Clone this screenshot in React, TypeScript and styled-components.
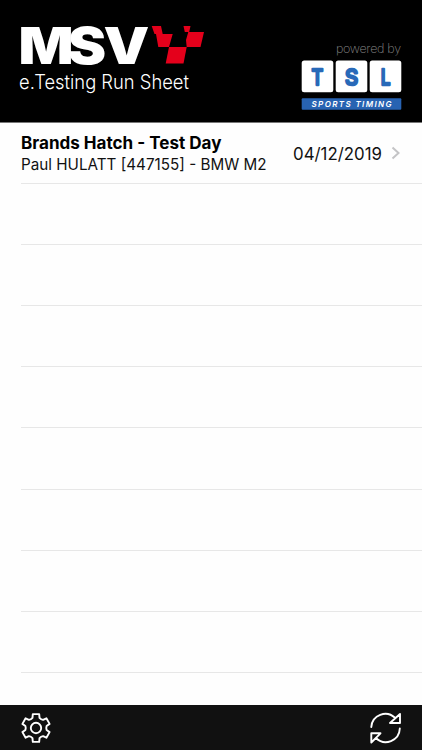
import React from "react";
import styled, { createGlobalStyle } from "styled-components";

const GlobalStyle = createGlobalStyle`
  * { box-sizing: border-box; }
  body { margin: 0; background: #fff; font-family: Inter, "Liberation Sans", sans-serif; }
`;

const Screen = styled.div`
  width: 100%;
  height: 100vh;
  display: flex;
  flex-direction: column;
  overflow: hidden;
  background: #fefefe;
`;

const Header = styled.header`
  flex: none;
  height: 123px;
  padding: 25px 20px 0 19px;
  display: flex;
  justify-content: space-between;
  background: #000;
  border-bottom: 1px solid #777;
`;

const Brand = styled.div`
  display: flex;
  flex-direction: column;
`;

const Logo = styled.svg`
  display: block;
  width: 186px;
  height: 40px;
  overflow: visible;
`;

const Fit = styled.svg`
  display: block;
  overflow: visible;
`;

const Timing = styled.div`
  width: 101px;
  padding-top: 14px;
`;

const List = styled.main`
  flex: 1;
  min-height: 0;
  overflow: hidden;
  padding-left: 21px;
`;

const Row = styled.div`
  height: 61.1px;
  border-bottom: 1px solid #e7e7e7;
  display: flex;
  align-items: center;
  justify-content: space-between;
  padding-right: 21px;
`;

const Details = styled.div`
  display: flex;
  flex-direction: column;
`;

const Footer = styled.footer`
  flex: none;
  height: 45px;
  padding: 0 20px;
  display: flex;
  align-items: center;
  justify-content: space-between;
  background: #111;
`;

const IconButton = styled.button`
  display: flex;
  padding: 0;
  border: 0;
  background: none;
`;

const DateGroup = styled.div`
  display: flex;
  align-items: center;
  gap: 9px;
`;

type LineProps = {
  text: string;
  width: number;
  height: number;
  size: number;
  baseline: number;
  weight?: number;
  fill?: string;
};

function TextLine({ text, width, height, size, baseline, weight = 400, fill = "#111" }: LineProps) {
  return (
    <Fit width={width} height={height}>
      <text x="0" y={baseline} fontSize={size} fontWeight={weight} fill={fill} textLength={width} lengthAdjust="spacingAndGlyphs">
        {text}
      </text>
    </Fit>
  );
}

function MsvLogo() {
  return (
    <Logo viewBox="19 25 186 40">
      <text transform="translate(18.500 63.500) scale(1.120 1)" x="0 44 76" fill="#fff" fontWeight="900" fontSize="51.500">
        MSV
      </text>
      <g fill="#e4001b">
        <path d="M151.700 26h9.300l1.700 8h10L169 47h-10.700L156 34h-1.500z" />
        <path d="M183.500 26h7l-1.300 6H204l-3.500 15h-13.800L186 40l2.300-8h-3.500z" />
        <path d="M169 47h17.700l-3.200 16.500h-17.800z" />
      </g>
    </Logo>
  );
}

const TILES = [
  { letter: "T", left: 301.7, center: 317.3, stretch: 0.84 },
  { letter: "S", left: 335.7, center: 351.7, stretch: 0.95 },
  { letter: "L", left: 369.7, center: 385.7, stretch: 0.8 },
];

function TslLogo() {
  return (
    <Fit width="102" height="52" viewBox="301 60 102 52">
      {TILES.map(({ letter, left, center, stretch }) => (
        <g key={letter}>
          <rect x={left} y="60.400" width="31.600" height="31.800" rx="2.500" fill="#fff" />
          <text
            transform={`translate(${center} 84.600) scale(${stretch} 1)`}
            textAnchor="middle"
            fontSize="21.500"
            fontWeight="500"
            fill="#2869b8"
            stroke="#2869b8"
            strokeWidth="2.300"
            strokeLinejoin="round"
          >
            {letter}
          </text>
        </g>
      ))}
      <rect x="301.700" y="98.300" width="99.600" height="11.400" rx="1" fill="#2863b2" />
      <text x="311.500" y="106.800" fontSize="8" fontWeight="600" fontStyle="italic" fill="#fff" textLength="80">
        SPORTS TIMING
      </text>
    </Fit>
  );
}

const gearPoint = (radius: number, degrees: number) => {
  const a = (degrees * Math.PI) / 180;
  return `${(16 + radius * Math.sin(a)).toFixed(2)} ${(16 - radius * Math.cos(a)).toFixed(2)}`;
};

const gearPath =
  Array.from({ length: 6 }, (_, i) => {
    const a = i * 60;
    return `${i ? "L" : "M"}${gearPoint(10.8, a - 19)}L${gearPoint(14.2, a - 13)}L${gearPoint(14.2, a + 13)}L${gearPoint(10.8, a + 19)}Q${gearPoint(9.9, a + 30)} ${gearPoint(10.8, a + 41)}`;
  }).join("") + "Z";

export default function App() {
  return (
    <>
      <GlobalStyle />
      <Screen>
        <Header>
          <Brand>
            <MsvLogo />
            <TextLine text="e.Testing Run Sheet" width={170} height={28} size={20} baseline={24} weight={300} fill="#fff" />
          </Brand>
          <Timing>
            <Fit width="101" height="21">
              <text x="35" y="14" fontSize="12.500" fontWeight="200" fill="#8a8a8a" textLength="65">
                powered by
              </text>
            </Fit>
            <TslLogo />
          </Timing>
        </Header>
        <List>
          <Row>
            <Details>
              <TextLine text="Brands Hatch - Test Day" width={200.5} height={22} size={17} baseline={17} weight={700} fill="#000" />
              <TextLine text="Paul HULATT [447155] - BMW M2" width={245.5} height={20} size={15.5} baseline={16} />
            </Details>
            <DateGroup>
              <TextLine text="04/12/2019" width={89} height={22} size={17} baseline={17.5} />
              <svg width="10" height="14" viewBox="0 0 10 14" fill="none" stroke="#c4c4c6" strokeWidth="2">
                <path d="M1.500 1.500 7.500 7l-6 5.500" />
              </svg>
            </DateGroup>
          </Row>
          {Array.from({ length: 9 }, (_, i) => (
            <Row key={i} />
          ))}
        </List>
        <Footer>
          <IconButton aria-label="Settings">
            <svg width="32" height="32" viewBox="0 0 32 32" fill="none" stroke="#fff" strokeWidth="1.900" strokeLinejoin="round">
              <circle cx="16" cy="16" r="5.200" />
              <path d={gearPath} />
            </svg>
          </IconButton>
          <IconButton aria-label="Refresh">
            <svg width="32" height="32" viewBox="0 0 32 32" fill="none" stroke="#fff" strokeWidth="1.900" strokeLinejoin="round" strokeLinecap="round">
              <path d="M1.300 15A14 14 0 0 1 25 5.800M30 2V11H20zM29.800 16.500A14 14 0 0 1 6 26M1.300 30.500V21.300H10.500z" />
            </svg>
          </IconButton>
        </Footer>
      </Screen>
    </>
  );
}
